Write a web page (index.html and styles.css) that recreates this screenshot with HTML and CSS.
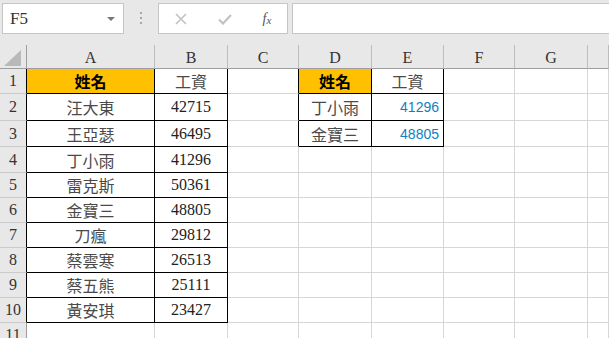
FILE: index.html
```html
<!DOCTYPE html>
<html lang="zh-Hant">
<head>
    <meta charset="UTF-8">
    <title>工資</title>
    <link rel="stylesheet" href="styles.css">
</head>
<body>
    <div class="toolbar">
        <div class="namebox">
            <span class="ref">F5</span>
            <span class="caret"></span>
        </div>
        <div class="grip"><i></i><i></i><i></i></div>
        <div class="fbtns">
            <span class="slot">
                <svg width="12" height="12" viewBox="0 0 12 12"><path d="M1 1L11 11M11 1L1 11" stroke="#c2c2c2" stroke-width="1.6" fill="none"/></svg>
            </span>
            <span class="slot">
                <svg width="14" height="12" viewBox="0 0 14 12"><path d="M1 6.5L5 10.5L13 2" stroke="#c2c2c2" stroke-width="2.2" fill="none"/></svg>
            </span>
            <span class="slot fx"><i>f</i><small>x</small></span>
        </div>
        <div class="finput"></div>
    </div>

    <table class="sheet">
        <colgroup>
            <col class="c-rh"><col class="c-a"><col class="c-b"><col class="c-c"><col class="c-d"><col class="c-e"><col class="c-f"><col class="c-g"><col class="c-h">
        </colgroup>
        <tr class="hrow">
            <th class="corner"><svg width="18" height="16" viewBox="0 0 18 16"><polygon points="17,0 17,16 0,16" fill="#b9b9b9"/></svg></th>
            <th>A</th><th>B</th><th>C</th><th>D</th><th>E</th><th>F</th><th>G</th><th></th>
        </tr>
        <tr class="r1">
            <td class="rh edge">1</td>
            <td class="bx orange name"><b>姓名</b></td>
            <td class="bx name">工資</td>
            <td class="edge"></td>
            <td class="bx orange name"><b>姓名</b></td>
            <td class="bx name">工資</td>
            <td></td><td></td><td></td>
        </tr>
        <tr class="r2">
            <td class="rh edge">2</td>
            <td class="bx name">汪大東</td>
            <td class="bx num">42715</td>
            <td class="edge"></td>
            <td class="bx name">丁小雨</td>
            <td class="bx blue">41296</td>
            <td></td><td></td><td></td>
        </tr>
        <tr class="r3">
            <td class="rh edge">3</td>
            <td class="bx name">王亞瑟</td>
            <td class="bx num">46495</td>
            <td class="edge"></td>
            <td class="bx name">金寶三</td>
            <td class="bx blue">48805</td>
            <td></td><td></td><td></td>
        </tr>
        <tr class="r4">
            <td class="rh edge">4</td>
            <td class="bx name">丁小雨</td>
            <td class="bx num">41296</td>
            <td></td><td></td><td></td><td></td><td></td><td></td>
        </tr>
        <tr>
            <td class="rh edge">5</td>
            <td class="bx name">雷克斯</td>
            <td class="bx num">50361</td>
            <td></td><td></td><td></td><td></td><td></td><td></td>
        </tr>
        <tr>
            <td class="rh edge">6</td>
            <td class="bx name">金寶三</td>
            <td class="bx num">48805</td>
            <td></td><td></td><td></td><td></td><td></td><td></td>
        </tr>
        <tr>
            <td class="rh edge">7</td>
            <td class="bx name">刀瘋</td>
            <td class="bx num">29812</td>
            <td></td><td></td><td></td><td></td><td></td><td></td>
        </tr>
        <tr>
            <td class="rh edge">8</td>
            <td class="bx name">蔡雲寒</td>
            <td class="bx num">26513</td>
            <td></td><td></td><td></td><td></td><td></td><td></td>
        </tr>
        <tr>
            <td class="rh edge">9</td>
            <td class="bx name">蔡五熊</td>
            <td class="bx num">25111</td>
            <td></td><td></td><td></td><td></td><td></td><td></td>
        </tr>
        <tr class="r10">
            <td class="rh edge">10</td>
            <td class="bx name">黃安琪</td>
            <td class="bx num">23427</td>
            <td></td><td></td><td></td><td></td><td></td><td></td>
        </tr>
        <tr>
            <td class="rh">11</td>
            <td></td><td></td><td></td><td></td><td></td><td></td><td></td><td></td>
        </tr>
    </table>
</body>
</html>
```

FILE: styles.css
```css
:root {
    --chrome-bg: #e8e8e8;
    --box-border: #c6c6c6;
    --grid: #d6d6d6;
    --head-line: #bdbdbd;
    --head-dark: #9e9e9e;
    --orange: #ffc000;
    --blue: #0f7ec4;
}

body {
    margin: 0;
    width: 609px;
    height: 338px;
    overflow: hidden;
    background: #fff;
    font-family: "Liberation Serif", "Noto Sans CJK TC", serif;
    color: #222;
}

/* formula bar */
.toolbar {
    display: flex;
    align-items: flex-start;
    height: 45px;
    padding: 3px 0 0 2px;
    box-sizing: border-box;
    background: var(--chrome-bg);
}

.namebox {
    display: flex;
    align-items: center;
    justify-content: space-between;
    width: 122px;
    height: 31px;
    padding: 0 8px 0 7px;
    box-sizing: border-box;
    background: #fff;
    border: 1px solid var(--box-border);
}

.ref {
    font-size: 17px;
    color: #333;
}

.caret {
    width: 0;
    height: 0;
    border-left: 4px solid transparent;
    border-right: 4px solid transparent;
    border-top: 4px solid #777;
}

.grip {
    display: flex;
    flex-direction: column;
    gap: 3px;
    width: 34px;
    align-items: center;
    padding-top: 9px;
}

.grip i {
    width: 2px;
    height: 2px;
    background: #a8a8a8;
}

.fbtns {
    display: flex;
    width: 130px;
    height: 31px;
    box-sizing: border-box;
    background: #fff;
    border: 1px solid var(--box-border);
}

.slot {
    display: flex;
    align-items: center;
    justify-content: center;
    width: 44px;
}

.slot.fx {
    width: 40px;
    font-size: 14px;
    color: #555;
    font-style: italic;
}

.slot.fx small {
    font-size: 11px;
    margin-top: 3px;
}

.finput {
    flex: 1;
    height: 31px;
    margin-left: 4px;
    box-sizing: border-box;
    background: #fff;
    border: 1px solid var(--box-border);
    border-right: none;
}

/* grid */
.sheet {
    border-collapse: separate;
    border-spacing: 0;
    table-layout: fixed;
    width: 609px;
}

.c-rh { width: 27px; }
.c-a { width: 128px; }
.c-b { width: 73px; }
.c-c { width: 71px; }
.c-d { width: 73px; }
.c-e { width: 72px; }
.c-f { width: 71px; }
.c-g { width: 73px; }
.c-h { width: 21px; }

.sheet th,
.sheet td {
    box-sizing: border-box;
    padding: 0;
    border-right: 1px solid var(--grid);
    border-bottom: 1px solid var(--grid);
    text-align: center;
    vertical-align: middle;
    font-size: 16px;
    white-space: nowrap;
    overflow: hidden;
}

tr { height: 25px; }
tr.hrow { height: 24px; }
tr.r2 { height: 27px; }
tr.r3, tr.r4 { height: 26px; }
tr.r10 { height: 24px; }

.sheet th {
    background: var(--chrome-bg);
    border-right-color: var(--head-line);
    border-bottom-color: var(--head-dark);
    font-weight: normal;
    color: #333;
    padding-top: 2px;
}

.sheet th.corner {
    text-align: right;
    vertical-align: bottom;
    padding: 0 4px 2px 0;
    border-right-color: var(--head-dark);
}

.sheet th.corner svg {
    display: block;
    margin-left: auto;
}

.sheet td.rh {
    background: var(--chrome-bg);
    border-right-color: var(--head-dark);
    border-bottom-color: #cacaca;
    color: #333;
}

.sheet td.edge {
    border-right-color: #000;
}

.sheet td.bx {
    border-right-color: #000;
    border-bottom-color: #000;
}

.orange {
    background: var(--orange);
}

.name {
    font-family: "Noto Sans CJK TC", sans-serif;
    font-size: 18px;
    color: #4a4a4a;
}

.name b {
    color: #000;
}

.num {
    color: #222;
}

.sheet td.blue {
    font-family: "Liberation Sans", sans-serif;
    font-size: 14px;
    color: var(--blue);
    text-align: right;
    padding-right: 4px;
}
```
